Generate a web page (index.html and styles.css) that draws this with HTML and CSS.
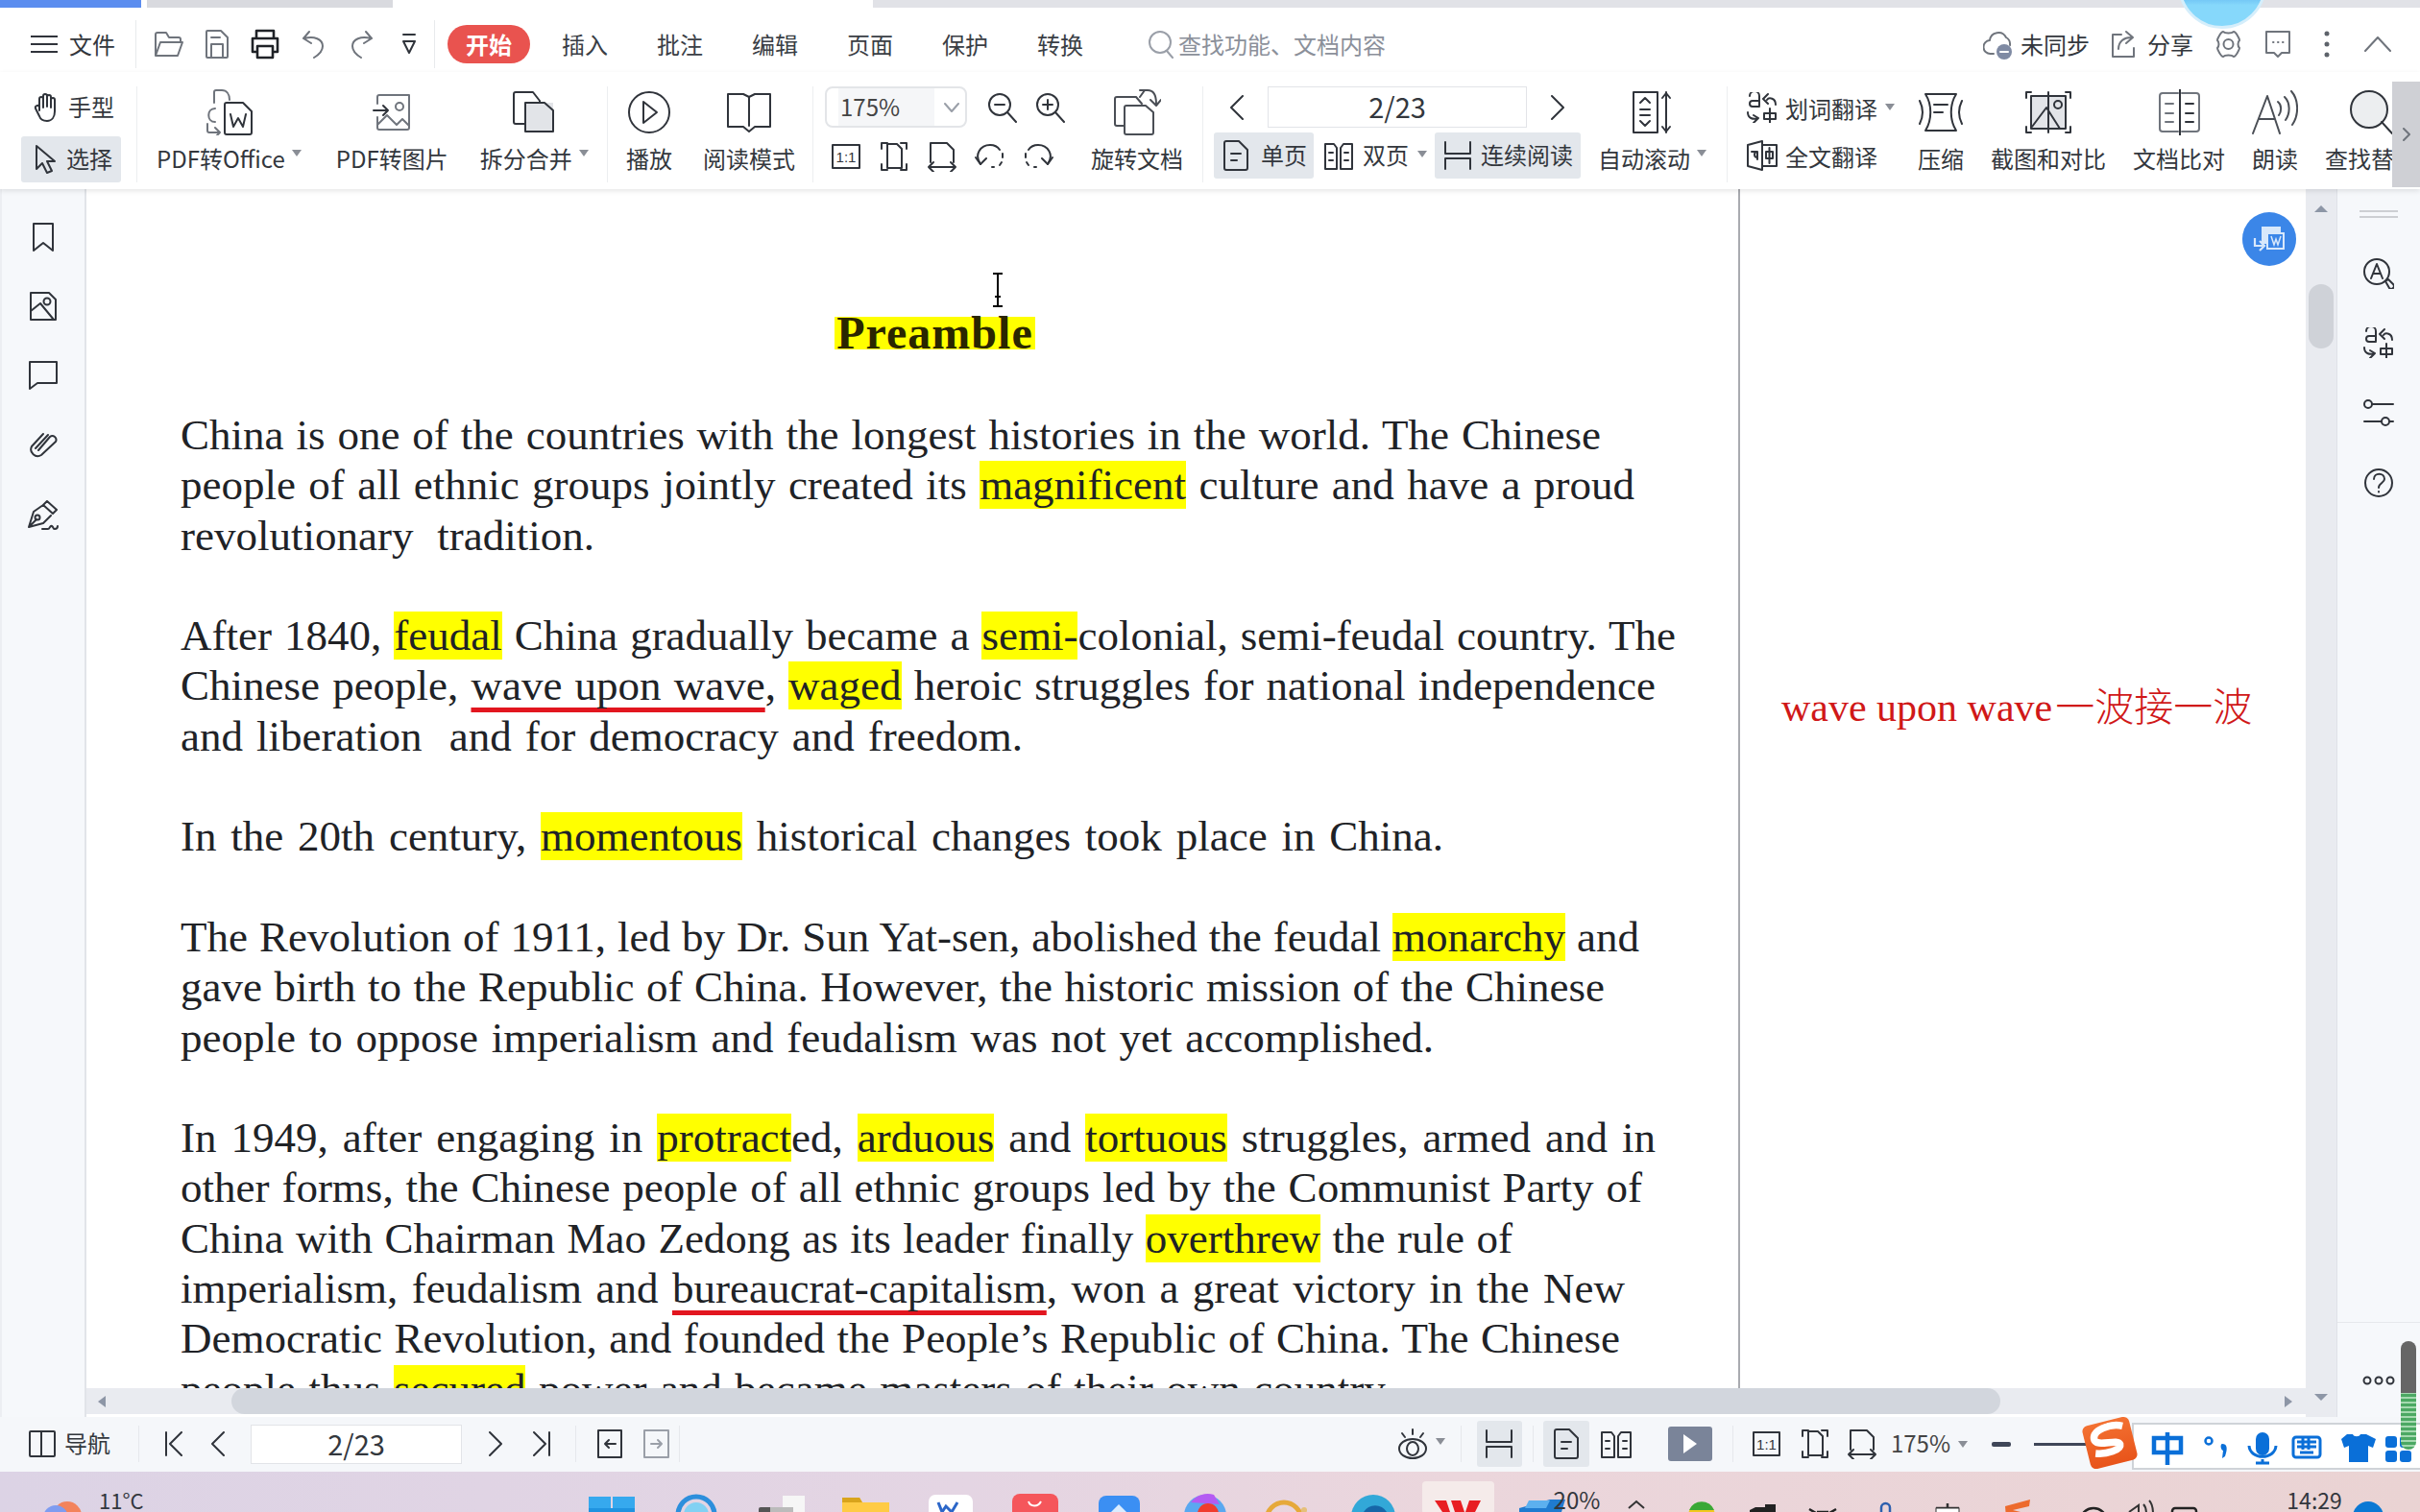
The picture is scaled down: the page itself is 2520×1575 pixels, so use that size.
FILE: index.html
```html
<!DOCTYPE html>
<html lang="zh-CN">
<head>
<meta charset="utf-8">
<title>WPS PDF</title>
<link rel="stylesheet" href="styles.css">
</head>
<body>
<div class="app">
  <div class="strip"><i class="s-blue"></i><i class="s-gray"></i><i class="s-rest"></i></div>

  <div class="menu">
    <svg class="s" width="28" height="22" viewBox="0 0 28 22"><path d="M0 3h28M0 11h28M0 19h28"/></svg>
    <span class="file">文件</span>
    <i class="msep m1"></i>
    <div class="qa">
      <svg class="s gy" width="32" height="30" viewBox="0 0 32 30"><path d="M2 27V5a2 2 0 0 1 2-2h9l3 5h10a2 2 0 0 1 2 2v3M2 27l5-14h23l-5 14z"/></svg>
      <svg class="s gy" width="26" height="32" viewBox="0 0 26 32"><path d="M2 3a1 1 0 0 1 1-1h14l7 7v20a1 1 0 0 1-1 1H3a1 1 0 0 1-1-1zM7 30V16h12v14M7 9h9"/></svg>
      <svg class="s thick" width="30" height="32" viewBox="0 0 30 32"><path d="M6 10V2h18v8M6 24H2V10h26v14h-4M7 18h16v12H7z"/></svg>
      <svg class="s gy" width="25" height="30" viewBox="0 0 25 30"><path d="M8 2L2 9l8 5M3 9c10-3 19 1 19 8 0 5-4 9-9 12"/></svg>
      <svg class="s gy" width="25" height="30" viewBox="0 0 25 30"><path d="M17 2l6 7-8 5M22 9C12 6 3 10 3 17c0 5 4 9 9 12"/></svg>
      <svg class="s" width="18" height="24" viewBox="0 0 18 24"><path d="M3 2h12M3 9l6 12 6-12z"/></svg>
    </div>
    <i class="msep m2"></i>
    <span class="pill">开始</span>
    <div class="tabs"><span>插入</span><span>批注</span><span>编辑</span><span>页面</span><span>保护</span><span>转换</span></div>
    <div class="search">
      <svg class="s sg" width="28" height="30" viewBox="0 0 28 30"><circle cx="13" cy="13" r="11"/><path d="M20 22l6 7"/></svg>
      <span>查找功能、文档内容</span>
    </div>
    <div class="mright">
      <svg class="s gy" width="30" height="32" viewBox="0 0 30 32"><path d="M11 26H8a7 7 0 0 1-1-14 9 9 0 0 1 17-3 8 8 0 0 1 4 8"/><circle class="cf" cx="22" cy="24" r="8"/><path class="wl" d="M18 24h8"/></svg>
      <span class="t1">未同步</span>
      <svg class="s gy t2" width="27" height="30" viewBox="0 0 27 30"><path d="M11 5H2v23h22v-9M8 20c0-8 6-12 13-12M16 2l7 6-7 6"/></svg>
      <span class="t3">分享</span>
      <svg class="s gy t2" width="29" height="32" viewBox="0 0 29 32"><path d="M9 3c2 2 9 2 11 0 2 0 6 7 6 9-2 2-2 6 0 8 0 2-4 9-6 9-2-2-9-2-11 0-2 0-6-7-6-9 2-2 2-6 0-8 0-2 4-9 6-9z"/><circle cx="14.500" cy="16" r="5"/></svg>
      <svg class="s gy t4" width="28" height="30" viewBox="0 0 28 30"><path d="M2 2h24v22h-8l-4 4-4-4H2z"/><path d="M9 13h.5M14 13h.5M19 13h.5"/></svg>
      <svg class="kebab" width="8" height="28" viewBox="0 0 8 28"><circle cx="4" cy="3" r="2.500"/><circle cx="4" cy="14" r="2.500"/><circle cx="4" cy="25" r="2.500"/></svg>
      <svg class="s gy t5" width="28" height="16" viewBox="0 0 28 16"><path d="M1 15L14 1l13 14"/></svg>
    </div>
  </div>

  <div class="ribbon">
    <div class="g ga">
      <div class="mode hand">
        <svg class="s" width="26" height="32" viewBox="0 0 26 32"><path d="M6 19V7a2 2 0 0 1 4 0V4a2 2 0 0 1 4 0v1a2 2 0 0 1 4 0v3a2 2 0 0 1 4 0v12c0 6-3 10-8 10-4 0-7-2-8-5l-4-8c-1-3 3-4 4-2z"/><path d="M10 7v9M14 4v11M18 6v10"/></svg>
        <span>手型</span>
      </div>
      <div class="mode on">
        <svg class="s" width="24" height="32" viewBox="0 0 24 32"><path d="M3 2v24l6-6 5 10 5-2-5-10h8z"/></svg>
        <span>选择</span>
      </div>
    </div>

    <div class="g gb">
      <div class="tool">
        <div class="ti"><svg class="s" width="49" height="48" viewBox="0 0 49 48"><path class="gyp" d="M9 14V3a2 2 0 0 1 2-2h6c5 0 8 4 8 10M10 20c-9 0-9 14 0 14M2 36v7a2 2 0 0 0 2 2h11M10 40l5 5-5 5"/><path d="M20 16a2 2 0 0 1 2-2h17l9 9v22a2 2 0 0 1-2 2H22a2 2 0 0 1-2-2zM26 26l3 13 5-9 5 9 3-13"/></svg></div>
        <div class="tl">PDF转Office<i class="car"></i></div>
      </div>
      <div class="tool">
        <div class="ti"><svg class="s" width="40" height="38" viewBox="0 0 40 38"><path class="gyp" d="M5 10V3a2 2 0 0 1 2-2h31v34a2 2 0 0 1-2 2H7a2 2 0 0 1-2-2V24M5 32l10-10 10 10 6-6 7 7"/><circle class="gyp" cx="28" cy="13" r="4"/><path d="M1 17h15M11 12l5 5-5 5"/></svg></div>
        <div class="tl">PDF转图片</div>
      </div>
      <div class="tool merge">
        <div class="ti"><svg class="s" width="44" height="44" viewBox="0 0 44 44"><rect class="fg" x="13" y="12" width="29" height="30"/><path d="M1 3a2 2 0 0 1 2-2h18l7 9v2M13 34H3a2 2 0 0 1-2-2V3"/><path d="M13 12h20l9 8v22H13z"/></svg></div>
        <div class="tl">拆分合并<i class="car"></i></div>
      </div>
    </div>

    <div class="g gc">
      <div class="tool">
        <div class="ti"><svg class="s" width="44" height="44" viewBox="0 0 44 44"><circle cx="22" cy="22" r="21"/><path d="M16 11l14 11-14 11z"/></svg></div>
        <div class="tl">播放</div>
      </div>
      <div class="tool">
        <div class="ti"><svg class="s" width="46" height="42" viewBox="0 0 46 42"><path d="M1 2h16l6 3 6-3h16v34H29l-6 5-6-5H1zM23 5v30"/></svg></div>
        <div class="tl">阅读模式</div>
      </div>
    </div>

    <div class="g gd">
      <div class="zcol">
        <div class="zrow">
          <div class="zbox"><span class="zval">175%</span><svg class="s sg" width="16" height="10" viewBox="0 0 16 10"><path d="M1 1l7 8 7-8"/></svg></div>
          <svg class="s zi1" width="32" height="32" viewBox="0 0 32 32"><circle cx="13" cy="13" r="11"/><path d="M8 13h10M21 21l9 10"/></svg>
          <svg class="s zi2" width="32" height="32" viewBox="0 0 32 32"><circle cx="13" cy="13" r="11"/><path d="M8 13h10M13 8v10M21 21l9 10"/></svg>
        </div>
        <div class="qa small">
          <svg class="s" width="30" height="26" viewBox="0 0 30 26"><rect x="1" y="1" width="28" height="24"/><text x="15" y="19" class="svt">1:1</text></svg>
          <svg class="s" width="28" height="30" viewBox="0 0 28 30"><path d="M7 1H1v6M21 1h6v6M7 29H1v-6M21 29h6v-6"/><path d="M7 2h10l5 5v20H7z"/></svg>
          <svg class="s" width="30" height="32" viewBox="0 0 30 32"><path d="M3 22V2h17l7 7v13M1 27h28M6 22l-5 5 5 5M24 22l5 5-5 5"/></svg>
          <svg class="s" width="32" height="28" viewBox="0 0 32 28"><path d="M6 22C-1 12 6 2 16 2c4 0 8 2 10 5"/><path d="M29 11v4M28 20l-2 3M20 25h-2"/><path d="M1 15l5 7 6-6"/></svg>
          <svg class="s" width="32" height="28" viewBox="0 0 32 28"><path d="M26 22c7-10 0-20-10-20-4 0-8 2-10 5"/><path d="M3 11v4M4 20l2 3M12 25h2"/><path d="M31 15l-5 7-6-6"/></svg>
        </div>
      </div>
      <div class="tool rot">
        <div class="ti"><svg class="s" width="49" height="48" viewBox="0 0 49 48"><path class="thin" d="M11 38H3a2 2 0 0 1-2-2V10a2 2 0 0 1 2-2h20l6 7"/><path class="thin" d="M11 19a2 2 0 0 1 2-2h20l8 7v21a2 2 0 0 1-2 2H13a2 2 0 0 1-2-2zM27 8l5-7M27 1h8c6 0 9 4 9 14M38 11l6 6 5-6"/></svg></div>
        <div class="tl">旋转文档</div>
      </div>
    </div>

    <div class="g ge">
      <div class="ncol">
        <div class="nrow">
          <svg class="s" width="14" height="26" viewBox="0 0 14 26"><path d="M13 1L1 13l12 12"/></svg>
          <div class="pinput">2/23</div>
          <svg class="s" width="14" height="26" viewBox="0 0 14 26"><path d="M1 1l12 12L1 25"/></svg>
        </div>
        <div class="vrow">
          <div class="vbtn on b1">
            <svg class="s" width="26" height="32" viewBox="0 0 26 32"><path d="M1 3a2 2 0 0 1 2-2h13l9 9v19a2 2 0 0 1-2 2H3a2 2 0 0 1-2-2zM8 14h10M8 21h6"/></svg>
            <span>单页</span>
          </div>
          <div class="vbtn b2">
            <svg class="s" width="30" height="30" viewBox="0 0 30 30"><path d="M1 3h9l3 4v22H1zM17 7l3-4h9v26H17zM5 12h4M5 20h4M21 12h4M21 20h4"/></svg>
            <span>双页</span><i class="car"></i>
          </div>
          <div class="vbtn on b3">
            <svg class="s" width="28" height="30" viewBox="0 0 28 30"><path d="M1 1v12h26V1M1 29V18h26v11"/></svg>
            <span>连续阅读</span>
          </div>
        </div>
      </div>
      <div class="tool auto">
        <div class="ti"><svg class="s" width="42" height="44" viewBox="0 0 42 44"><rect x="1" y="1" width="25" height="42"/><path d="M8 12l5-5 5 5M8 31l5 5 5-5M8 19h10M8 25h10M35 1v42M31 7l4-5 4 5M31 37l4 5 4-5"/></svg></div>
        <div class="tl">自动滚动<i class="car"></i></div>
      </div>
    </div>

    <div class="gf">
      <div class="tcol">
        <div class="trow">
          <svg class="s" width="32" height="32" viewBox="0 0 32 32"><path d="M3 4a5 5 0 0 1 10 0v10M13 9H6a3 3 0 0 0 0 6h7M21 8c2-3 9-2 9 5M17 7l5-5M17 7l5 5M1 21c0 6 5 8 11 6M7 24l5 3-5 5M18 22h12v6H18zM24 17v15"/></svg>
          <span>划词翻译</span><i class="car"></i>
        </div>
        <div class="trow">
          <svg class="s" width="32" height="32" viewBox="0 0 32 32"><path d="M1 5l15-4v30L1 27zM16 5h15v22H16zM20 12h7v7h-7zM23.500 8v16M11 12a3 3 0 1 0 0 6v2M5 12h6v8"/></svg>
          <span>全文翻译</span>
        </div>
      </div>
      <div class="tool">
        <div class="ti"><svg class="s" width="46" height="40" viewBox="0 0 46 40"><path d="M7 1h32c-7 11-7 27 0 38H7c7-11 7-27 0-38zM16 12h14M16 20h9M1 8c4 8 4 16 0 24M45 8c-4 8-4 16 0 24"/></svg></div>
        <div class="tl">压缩</div>
      </div>
      <div class="tool">
        <div class="ti"><svg class="s" width="48" height="44" viewBox="0 0 48 44"><rect class="fg" x="6" y="5" width="36" height="34"/><path d="M6 1H1v6M42 1h5v6M6 43H1v-6M42 43h5v-6M6 5h36v34H6zM7 37L22 17l14 22M24 1v42"/><circle cx="34" cy="14" r="4"/></svg></div>
        <div class="tl">截图和对比</div>
      </div>
      <div class="tool">
        <div class="ti"><svg class="s" width="43" height="48" viewBox="0 0 43 48"><path class="gyp" d="M20 4H4a3 3 0 0 0-3 3v34a3 3 0 0 0 3 3h16M24 4h15a3 3 0 0 1 3 3v34a3 3 0 0 1-3 3H24M7 15h8M7 25h8M7 34h8"/><path d="M22 0v48M28 15h8M28 25h8M28 34h8"/></svg></div>
        <div class="tl">文档比对</div>
      </div>
      <div class="tool">
        <div class="ti"><svg class="s thin" width="48" height="46" viewBox="0 0 48 46"><path d="M1 45L16 6l13 39M7 30h17M27 12c4 3 4 10 1 14M34 7c6 6 6 17 1 24M41 1c8 9 8 25 1 35"/></svg></div>
        <div class="tl">朗读</div>
      </div>
      <div class="tool">
        <div class="ti"><svg class="s" width="44" height="46" viewBox="0 0 44 46"><circle class="fl" cx="20" cy="20" r="19"/><path d="M33 33l11 12"/></svg></div>
        <div class="tl">查找替换</div>
      </div>
    </div>
    <div class="rmore"><svg class="s gy" width="8" height="14" viewBox="0 0 8 14"><path d="M1 1l6 6-6 6"/></svg></div>
  </div>

  <div class="main">
    <aside class="rail">
      <svg class="s" width="22" height="30" viewBox="0 0 22 30"><path d="M1 1h20v28l-10-8-10 8z"/></svg>
      <svg class="s" width="28" height="30" viewBox="0 0 28 30"><path d="M1 1h19l7 7v21H1z"/><path d="M1 20l10-8 14 17"/><circle cx="18" cy="10" r="3.500"/></svg>
      <svg class="s" width="30" height="30" viewBox="0 0 30 30"><path d="M1 1h28v22H9l-8 6z"/></svg>
      <svg class="s" width="32" height="30" viewBox="0 0 32 30"><path d="M11 21L23 7a4 4 0 0 1 6 5L14 26a7 7 0 0 1-10-9L16 4M8 19L21 5"/></svg>
      <svg class="s" width="32" height="34" viewBox="0 0 32 34"><path d="M20 2l10 9-4 4-10-9zM16 6L6 13 1 29l15-4 8-8M1 29l8-8"/><circle cx="10" cy="19" r="2.500"/><path d="M15 31h6c2 0 2-4 4-3s1 3 3 3 3-1 3-3"/></svg>
    </aside>
    <div class="center">
      <div class="docrow">
        <div class="page">
          <div class="title"><span>Preamble</span></div>
          <div class="para">
            <div class="ln w1">China is one of the countries with the longest histories in the world. The Chinese</div>
            <div class="ln w2">people of all ethnic groups jointly created its <b class="hl">magnificent</b> culture and have a proud</div>
            <div class="ln w3">revolutionary tradition.</div>
          </div>
          <div class="para">
            <div class="ln w4">After 1840, <b class="hl">feudal</b> China gradually became a <b class="hl">semi-</b>colonial, semi-feudal country. The</div>
            <div class="ln w5">Chinese people, <u class="red">wave upon wave</u>, <b class="hl">waged</b> heroic struggles for national independence</div>
            <div class="ln w6">and liberation &nbsp;and for democracy and freedom.</div>
          </div>
          <div class="para">
            <div class="ln w7">In the 20th century, <b class="hl">momentous</b> historical changes took place in China.</div>
          </div>
          <div class="para">
            <div class="ln w8">The Revolution of 1911, led by Dr. Sun Yat-sen, abolished the feudal <b class="hl">monarchy</b> and</div>
            <div class="ln w9">gave birth to the Republic of China. However, the historic mission of the Chinese</div>
            <div class="ln w10">people to oppose imperialism and feudalism was not yet accomplished.</div>
          </div>
          <div class="para">
            <div class="ln w11">In 1949, after engaging in <b class="hl">protract</b>ed, <b class="hl">arduous</b> and <b class="hl">tortuous</b> struggles, armed and in</div>
            <div class="ln w12">other forms, the Chinese people of all ethnic groups led by the Communist Party of</div>
            <div class="ln w13">China with Chairman Mao Zedong as its leader finally <b class="hl">overthrew</b> the rule of</div>
            <div class="ln w14">imperialism, feudalism and <u class="red">bureaucrat-capitalism</u>, won a great victory in the New</div>
            <div class="ln w15">Democratic Revolution, and founded the People’s Republic of China. The Chinese</div>
            <div class="ln w16">people thus <b class="hl">secured</b> power and became masters of their own country.</div>
          </div>
        </div>
        <div class="note"><span class="nl">wave upon wave</span><span class="nc">一波接一波</span></div>
      </div>
      <div class="hscroll">
        <i class="tri l"></i><i class="thumb"></i><i class="tri r"></i>
      </div>
    </div>
    <div class="vscroll"><i class="tri u"></i><i class="vthumb"></i><i class="tri d"></i></div>
    <aside class="rrail">
      <svg class="handle" width="40" height="8" viewBox="0 0 40 8"><path d="M0 1h40M0 7h40"/></svg>
      <svg class="s" width="32" height="32" viewBox="0 0 32 32"><circle cx="14" cy="14" r="13"/><path d="M8 21l6-15 6 15M10 16h8M23 24l3-2 5 5a2 2 0 0 1-4 4z"/></svg>
      <svg class="s rr2" width="32" height="32" viewBox="0 0 32 32"><path d="M3 4a5 5 0 0 1 10 0v10M13 9H6a3 3 0 0 0 0 6h7M21 8c2-3 9-2 9 5M17 7l5-5M17 7l5 5M1 21c0 6 5 8 11 6M7 24l5 3-5 5M18 22h12v6H18zM24 17v15"/></svg>
      <svg class="s rr3" width="32" height="28" viewBox="0 0 32 28"><circle cx="5" cy="5" r="4"/><path d="M9 5h22M1 23h18M27 23h4"/><circle cx="23" cy="23" r="4"/></svg>
      <svg class="s rr4" width="30" height="30" viewBox="0 0 30 30"><circle cx="15" cy="15" r="14"/><path d="M10 11c0-7 11-7 11 0 0 4-6 4-6 9M15 24v.5"/></svg>
      <div class="rbot"><svg class="s" width="34" height="10" viewBox="0 0 34 10"><circle cx="5" cy="5" r="3.500"/><circle cx="17" cy="5" r="3.500"/><circle cx="29" cy="5" r="3.500"/></svg></div>
    </aside>
  </div>

  <div class="status">
    <div class="sleft">
      <svg class="s" width="28" height="28" viewBox="0 0 28 28"><rect x="1" y="1" width="26" height="26" rx="1"/><path d="M13 1v26"/></svg>
      <span class="nav">导航</span>
      <i class="ssep n1"></i>
      <svg class="s n2" width="18" height="26" viewBox="0 0 18 26"><path d="M1 1v24M17 1L5 13l12 12"/></svg>
      <svg class="s n3" width="14" height="26" viewBox="0 0 14 26"><path d="M13 1L1 13l12 12"/></svg>
      <div class="pinput sp">2/23</div>
      <svg class="s n4" width="14" height="26" viewBox="0 0 14 26"><path d="M1 1l12 12L1 25"/></svg>
      <svg class="s n5" width="18" height="26" viewBox="0 0 18 26"><path d="M1 1l12 12L1 25M17 1v24"/></svg>
      <i class="ssep n6"></i>
      <svg class="s n7" width="26" height="30" viewBox="0 0 26 30"><rect x="1" y="1" width="24" height="28"/><path d="M19 15H8M12 11l-4 4 4 4"/></svg>
      <svg class="s sg n8" width="27" height="30" viewBox="0 0 27 30"><rect x="1" y="1" width="25" height="28"/><path d="M8 15h11M15 11l4 4-4 4"/></svg>
      <i class="ssep n9"></i>
    </div>
    <div class="sright">
      <svg class="s" width="30" height="32" viewBox="0 0 30 32"><ellipse cx="15" cy="21" rx="14" ry="10"/><ellipse cx="15" cy="21" rx="6" ry="7"/><path d="M15 1v5M4 5l3 4M26 5l-3 4"/></svg>
      <i class="car e1"></i>
      <i class="ssep e2"></i>
      <div class="sbtn e3"><svg class="s" width="28" height="30" viewBox="0 0 28 30"><path d="M1 1v12h26V1M1 29V18h26v11"/></svg></div>
      <i class="ssep e4"></i>
      <div class="sbtn e5"><svg class="s" width="26" height="32" viewBox="0 0 26 32"><path d="M1 3a2 2 0 0 1 2-2h13l9 9v19a2 2 0 0 1-2 2H3a2 2 0 0 1-2-2zM8 14h10M8 21h6"/></svg></div>
      <svg class="s e6" width="32" height="30" viewBox="0 0 32 30"><path d="M1 3h10l3 4v22H1zM18 7l3-4h10v26H18zM5 12h4M5 20h4M23 12h4M23 20h4"/></svg>
      <div class="play e7"><i></i></div>
      <i class="ssep e8"></i>
      <svg class="s e9" width="29" height="26" viewBox="0 0 29 26"><rect x="1" y="1" width="27" height="24"/><text x="14.500" y="19" class="svt">1:1</text></svg>
      <svg class="s e10" width="28" height="30" viewBox="0 0 28 30"><path d="M7 1H1v6M21 1h6v6M7 29H1v-6M21 29h6v-6"/><path d="M7 2h10l5 5v20H7z"/></svg>
      <svg class="s e11" width="30" height="32" viewBox="0 0 30 32"><path d="M3 22V2h17l7 7v13M1 27h28M6 22l-5 5 5 5M24 22l5 5-5 5"/></svg>
      <span class="pct">175%</span>
      <i class="car e12"></i>
      <i class="minus"></i>
      <i class="slider"></i>
    </div>
  </div>

  <div class="taskbar">
    <svg class="tbicons" width="2520" height="42" viewBox="0 0 2520 42">
      <circle cx="70" cy="46" r="15" fill="#f3835c"/><circle cx="58" cy="48" r="13" fill="#7f9cf0"/>
      <path d="M613 38V26h23v12zM638 26h23v12h-23z" fill="#36a9ee"/><path d="M613 42h48v-4h-48z" fill="#1f93e0"/>
      <circle cx="725" cy="45" r="19" fill="none" stroke="#2c8fdc" stroke-width="5"/><circle cx="725" cy="45" r="13" fill="#82d1f3"/>
      <rect x="815" y="25" width="23" height="20" fill="#f6f6f6"/><rect x="790" y="37" width="36" height="10" rx="2" fill="#555"/><rect x="802" y="37" width="24" height="10" fill="#bbb"/>
      <path d="M877 27h18l3 5h28v12h-49z" fill="#ffcb45"/><path d="M877 27h18l3 5h-21z" fill="#d9a41c"/>
      <rect x="967" y="24" width="46" height="24" rx="7" fill="#fff"/><path d="M977 32l4 10 4-6 6 6 6-10" stroke="#2b66c8" stroke-width="3" fill="none"/>
      <rect x="1054" y="23" width="48" height="26" rx="8" fill="#f5565b"/><path d="M1071 31c2 6 10 6 13 0" stroke="#fff" stroke-width="2" fill="none"/>
      <rect x="1144" y="25" width="43" height="24" rx="8" fill="#3b8ff3"/><path d="M1157 42l8-8 8 8z" fill="#d9ecff"/>
      <circle cx="1255" cy="46" r="22" fill="#5aa8f0"/><path d="M1240 32a22 22 0 0 1 24-8l6 10z" fill="#b45bf2"/><circle cx="1258" cy="44" r="11" fill="#f03c2e"/>
      <circle cx="1337" cy="50" r="18" fill="none" stroke="#e6a93a" stroke-width="5"/><circle cx="1358" cy="40" r="3" fill="#e6c07a"/>
      <circle cx="1430" cy="47" r="23" fill="#32a8d8"/><path d="M1420 42a14 14 0 0 1 24 0v8h-24z" fill="#1666a8"/>
      <rect x="1481" y="10" width="75" height="34" rx="4" fill="#f5ebea"/><path d="M1494 30h12l4 12h-8zM1511 30h10l4 12h-10zM1530 30h12l-6 12h-10z" fill="#e81e22"/>
      <path d="M1582 38l32-9h16l-4 13h-44z" fill="#1f7bd0"/><path d="M1592 30h22l-4 8h-22z" fill="#5cb0ef"/>
      <path d="M1696 38l8-7 8 7" fill="none" stroke="#333" stroke-width="2"/>
      <circle cx="1772" cy="46" r="14" fill="#f2c81e"/><path d="M1759 40a14 14 0 0 1 26 0z" fill="#3aa836"/>
      <path d="M1822 40l6-3h10v-3h11v10h-27z" fill="#222"/>
      <path d="M1884 39l7 4M1912 39l-7 4M1892 42h12" stroke="#222" stroke-width="2.500" fill="none"/>
      <rect x="1959" y="33" width="9" height="20" rx="4.500" fill="none" stroke="#2d5fae" stroke-width="2.500"/>
      <path d="M2016 38h24M2028 33v10" stroke="#333" stroke-width="2.500" fill="none"/><rect x="2016" y="38" width="24" height="8" fill="#fff" stroke="#333"/>
      <path d="M2088 36l26-7-1 7-17 4 16 4-3 4h-20z" fill="#ed6a2d"/>
      <circle cx="2180" cy="52" r="14" fill="none" stroke="#222" stroke-width="2.500"/>
      <path d="M2217 42l10-7v10M2232 34c3 3 3 8 3 10M2238 30c4 4 4 10 4 14" fill="none" stroke="#333" stroke-width="2"/>
      <rect x="2262" y="38" width="25" height="14" rx="3" fill="none" stroke="#222" stroke-width="2.500"/>
      <circle cx="2466" cy="47" r="16" fill="#0a78d4"/>
    </svg>
    <span class="temp">11°C</span>
    <span class="batt">20%</span>
    <span class="clock">14:29</span>
  </div>

  <div class="orb"></div>
  <div class="fab"><svg width="34" height="28" viewBox="0 0 34 28"><rect x="9" y="1" width="20" height="8" fill="#d8e8fb"/><path d="M9 9h6v10H9z" fill="#d8e8fb"/><rect x="15" y="8" width="17" height="16" fill="#3b86e8" stroke="#d8e8fb" stroke-width="2"/><path d="M19 11l3 9 2-6 2 6 3-9" stroke="#d8e8fb" stroke-width="1.500" fill="none"/><path d="M2 13v8h8M7 16l5 5-5 5" stroke="#d8e8fb" stroke-width="2.200" fill="none"/></svg></div>
  <svg class="beam" width="12" height="36" viewBox="0 0 12 36"><path d="M1 1h10M1 35h10M6 1v34M3 25h6" stroke="#000" stroke-width="2" fill="none"/></svg>

  <div class="ime">
    <svg width="300" height="48" viewBox="0 0 300 48">
      <path d="M21 14h28v15H21zM35 8v34" fill="none" stroke="#0a6fd8" stroke-width="4.500"/>
      <circle cx="78" cy="17" r="3.500" fill="none" stroke="#0a6fd8" stroke-width="2.500"/><path d="M92 20c5 0 6 4 3 13l-3 2 1-8c-3-1-3-7-1-7z" fill="#0a6fd8"/>
      <rect x="127" y="8" width="14" height="24" rx="7" fill="#0a6fd8"/><path d="M120 22c1 15 27 15 28 0M134 36v4M127 40h14" fill="none" stroke="#0a6fd8" stroke-width="3"/>
      <rect x="166" y="13" width="28" height="21" rx="3" fill="none" stroke="#0a6fd8" stroke-width="3"/><path d="M170 18h20M170 23h20M173 29h14M176 14v12M182 14v12" stroke="#0a6fd8" stroke-width="3" fill="none"/>
      <path d="M222 10h6c1 3 7 3 8 0h6l10 5-3 9-5-2v17h-20V22l-5 2-3-9z" fill="#0a6fd8"/>
      <rect x="262" y="12" width="12" height="12" rx="3" fill="#0a6fd8"/><rect x="262" y="27" width="12" height="12" rx="3" fill="#0a6fd8"/><rect x="277" y="27" width="12" height="12" rx="3" fill="#0a6fd8"/><rect x="277" y="12" width="12" height="12" rx="3" fill="#0a6fd8"/>
    </svg>
  </div>
  <div class="slogo"><svg width="40" height="42" viewBox="0 0 40 42"><path d="M37 7C25 1 6 4 5 13c-1 10 24 5 25 12 0 6-16 7-27 3" fill="none" stroke="#fff" stroke-width="7.500"/></svg></div>
  <div class="volbar"></div>
</div>
</body>
</html>
```

FILE: styles.css
```css
html,body{margin:0;padding:0;}
body{width:2520px;height:1575px;overflow:hidden;font-family:"Noto Sans CJK SC","Noto Sans",sans-serif;color:#33373d;font-size:24px;background:#fff;}
i{display:block;font-style:normal;}
svg{display:block;flex:none;}
.app{position:relative;width:2520px;height:1575px;display:flex;flex-direction:column;overflow:hidden;}

.s{fill:none;stroke:#30343b;stroke-width:2;stroke-linecap:round;stroke-linejoin:round;}
.s.gy{stroke:#6f747c;}
.s.sg{stroke:#9a9fa8;}
.s.thick{stroke:#1f2227;stroke-width:2.600;}
.s .gyp{stroke:#6f747c;}
.s.thin,.s .thin{stroke:#4a4e55;}
.s .fg{fill:#e2e4e8;stroke:none;}
.s .fl{fill:#eceef0;}
.s .cf{fill:#7f8aa3;stroke:none;}
.s .wl{stroke:#fff;}
.svt{font:400 15px "Liberation Sans",sans-serif;text-anchor:middle;stroke:none;fill:#30343b;}

.strip{height:8px;display:flex;flex:none;}
.s-blue{width:147px;background:#5b8def;}
.s-gray{width:256px;margin-left:6px;background:#d9dadf;}
.s-rest{margin-left:500px;flex:1;background:#e1e2e7;}

.menu{height:67px;flex:none;display:flex;align-items:center;padding:9px 0 0 32px;box-sizing:border-box;line-height:1;}
.file{margin-left:12px;}
.msep{width:1px;height:50px;background:#e8eaec;}
.m1{margin-left:21px;}
.qa{display:grid;grid-auto-flow:column;grid-auto-columns:50px;justify-items:center;align-items:center;}
.m1 + .qa{margin-left:9px;}
.m2{margin-left:1px;}
.pill{margin-left:13px;width:86px;height:40px;border-radius:20px;background:#e9534f;color:#fff;font-weight:700;display:flex;align-items:center;justify-content:center;}
.tabs{margin-left:33px;display:flex;gap:51px;color:#3a3e45;}
.search{margin-left:67px;display:flex;align-items:center;gap:4px;color:#8b909a;}
.mright{margin-left:auto;padding-right:30px;display:flex;align-items:center;}
.t1{margin-left:9px;}
.t2{margin-left:22px;}
.t3{margin-left:11px;}
.t4{margin-left:23px;}
.t5{margin-left:35px;}
.kebab{margin-left:33px;fill:#5e636b;}

.ribbon{height:122px;flex:none;display:flex;padding-top:15px;box-sizing:border-box;position:relative;box-shadow:0 2px 5px rgba(0,0,0,.1);z-index:2;background:#fff;overflow:hidden;}
.g{height:100px;flex:none;box-sizing:border-box;border-right:1px solid #eceef0;display:flex;}
.ga{width:143px;flex-direction:column;gap:8px;padding-left:22px;}
.gb{width:490px;padding-left:20px;gap:36px;}
.merge{margin-left:-3px;}
.gc{width:214px;padding-left:19px;gap:32px;}
.gd{width:406px;padding-left:12px;}
.ge{width:546px;padding-left:11px;}
.gf{flex:1;display:flex;padding-left:20px;gap:28px;white-space:nowrap;}
.mode{width:104px;height:48px;display:flex;align-items:center;box-sizing:border-box;padding-left:13px;gap:10px;}
.mode.hand{height:44px;}
.mode span{margin-top:-3px;}
.mode.on,.vbtn.on,.sbtn{background:#e3e7ec;border-radius:3px;}
.tool{display:flex;flex-direction:column;align-items:center;flex:none;}
.ti{height:53px;display:flex;align-items:center;justify-content:center;}
.tl{height:43px;line-height:43px;display:flex;align-items:center;white-space:nowrap;}
.car{width:0;height:0;border:5px solid transparent;border-top:7px solid #8a8e96;border-bottom:0;margin-left:7px;margin-top:-10px;}
.zcol{width:251px;}
.zrow{display:flex;align-items:center;height:43px;}
.zbox{width:148px;height:43px;box-sizing:border-box;border:2px solid #e3e5e8;border-radius:8px;display:flex;align-items:center;}
.zval{width:100px;height:100%;margin-left:12px;background:#f5f6f8;padding:0 0 2px 2px;box-sizing:border-box;display:flex;align-items:center;color:#444;margin-right:10px;}
.zi1{margin-left:21px;}
.zi2{margin-left:18px;}
.qa.small{margin-top:14px;margin-left:-3px;}
.rot{margin-left:26px;}
.ncol{width:383px;}
.nrow{height:43px;display:flex;align-items:center;padding-left:17px;gap:25px;}
.pinput{width:270px;height:43px;box-sizing:border-box;border:1px solid #e2e4e8;background:#fff;font-size:29px;display:flex;align-items:center;justify-content:center;color:#33373d;padding-bottom:3px;}
.vrow{display:flex;margin-top:5px;}
.vbtn{height:48px;display:flex;align-items:center;box-sizing:border-box;flex:none;}
.vbtn span{margin-top:-3px;}
.b1{width:104px;padding-left:10px;gap:13px;}
.b2{margin-left:11px;width:115px;gap:10px;}
.b2 .car{margin-left:-1px;margin-top:-4px;}
.b3{width:152px;padding-left:10px;gap:10px;}
.auto{margin-left:17px;}
.tcol{width:150px;padding-top:6px;}
.trow{height:32px;display:flex;align-items:center;gap:8px;margin-bottom:18px;}
.trow .car{margin-left:0;margin-top:-2px;}
.rmore{position:absolute;right:0;top:10px;width:29px;height:110px;background:#cfd0d5;display:flex;align-items:center;justify-content:center;}

.main{height:1279px;flex:none;display:flex;}
.rail{width:90px;flex:none;box-sizing:border-box;background:#f6f8fb;border-left:2px solid #eceef2;border-right:2px solid #e1e4e9;display:flex;flex-direction:column;align-items:center;gap:42px;padding-top:35px;}
.center{width:2311px;flex:none;display:flex;flex-direction:column;}
.docrow{height:1249px;flex:none;display:flex;background:#fff;overflow:hidden;}
.page{width:1722px;flex:none;box-sizing:border-box;border-right:2px solid #a9abb0;padding:133px 0 0 98px;font-family:"Liberation Serif",serif;font-size:45px;color:#202226;}
.title{height:34px;margin-bottom:63px;}
.title span{display:block;margin-left:681px;height:34px;line-height:34px;width:209px;background:#ffff00;color:#2a2600;font-weight:700;font-size:48px;letter-spacing:1px;text-align:center;}
.para{margin-bottom:52.3px;}
.ln{height:52.3px;line-height:52.3px;white-space:nowrap;text-align:justify;text-align-last:justify;}
.hl{font-weight:400;display:inline-block;height:50px;line-height:50px;background:#ffff00;vertical-align:top;margin-top:1px;}
.red{text-decoration:underline #e2161f 5px;text-underline-offset:8px;text-decoration-skip-ink:none;}
.w1{width:1479px;}.w2{width:1514px;}.w3{width:431px;}.w4{width:1557px;}.w5{width:1536px;}.w6{width:877px;}
.w7{width:1315px;}.w8{width:1519px;}.w9{width:1483px;}.w10{width:1305px;}.w11{width:1536px;}.w12{width:1522px;}
.w13{width:1387px;}.w14{width:1504px;}.w15{width:1499px;}.w16{width:1263px;}
.note{padding:506px 0 0 43px;color:#d01818;white-space:nowrap;display:flex;align-items:baseline;height:52px;}
.nl{font-family:"Liberation Serif",serif;font-size:42px;}
.nc{font-family:"Noto Sans CJK SC",sans-serif;font-size:41px;font-weight:300;margin-left:3px;}
.hscroll{height:27px;flex:none;background:#e9ebf0;display:flex;align-items:center;position:relative;}
.thumb{margin-left:151px;width:1842px;height:27px;border-radius:14px;background:#d2d6dd;}
.tri{width:0;height:0;border:6px solid transparent;}
.tri.l{position:absolute;left:12px;border-right:8px solid #8d96a6;border-left:0;}
.tri.r{position:absolute;right:14px;border-left:8px solid #8d96a6;border-right:0;}
.vscroll{width:33px;flex:none;box-sizing:border-box;border-right:1px solid #dfe2e7;background:#e9ebf0;display:flex;flex-direction:column;align-items:center;padding:17px 0 17px;}
.tri.u{border:7px solid transparent;border-bottom:7px solid #8d96a6;border-top:0;}
.tri.d{margin-top:auto;border:7px solid transparent;border-top:7px solid #8d96a6;border-bottom:0;}
.vthumb{margin-top:75px;width:26px;height:67px;border-radius:13px;background:#cfd2d8;margin-right:1px;}
.rrail{flex:1;background:#f6f8fb;display:flex;flex-direction:column;align-items:center;padding-top:22px;box-sizing:border-box;gap:42px;}
.rr2{margin-top:-2px;}.rr3{margin-top:1px;}.rr4{margin-top:2px;}
.handle{stroke:#cdcfd3;stroke-width:2;fill:none;}
.rbot{margin-top:auto;width:100%;height:99px;box-sizing:border-box;border-top:1px solid #e6e8ec;display:flex;justify-content:center;padding-top:55px;}

.status{height:57px;flex:none;background:#f5f7fa;display:flex;align-items:center;justify-content:space-between;padding:0 0 1px 30px;box-sizing:border-box;}
.sleft,.sright{display:flex;align-items:center;}
.nav{margin-left:9px;margin-top:-3px;}
.ssep{width:1px;height:38px;background:#e6e8ec;}
.n1{margin-left:29px;}.n2{margin-left:27px;}.n3{margin-left:30px;}
.pinput.sp{margin-left:27px;width:220px;height:41px;}
.n4{margin-left:28px;}.n5{margin-left:32px;}.n6{margin-left:26px;}.n7{margin-left:22px;}.n8{margin-left:22px;}.n9{margin-left:10px;}
.sright{padding-right:342px;}
.e1{margin-left:9px;margin-top:-6px;}
.e2{margin-left:16px;}
.sbtn{height:48px;display:flex;align-items:center;justify-content:center;}
.e3{width:47px;margin-left:16px;}
.e4{margin-left:11px;}
.e5{width:48px;margin-left:10px;}
.e6{margin-left:12px;}
.play{width:46px;height:36px;background:#7a8499;border-radius:3px;display:flex;align-items:center;justify-content:center;}
.play i{width:0;height:0;border:10px solid transparent;border-left:14px solid #fff;border-right:0;}
.e7{margin-left:38px;}
.e8{margin-left:21px;}
.e9{margin-left:20px;}.e10{margin-left:22px;}.e11{margin-left:20px;}
.pct{margin-left:15px;color:#444;margin-top:-3px;}
.e12{margin-left:8px;margin-top:0;}
.minus{margin-left:25px;width:20px;height:5px;border-radius:2px;background:#3f4658;}
.slider{margin-left:24px;width:60px;height:3px;background:#3f4658;}

.taskbar{height:43px;flex:1;position:relative;overflow:hidden;background:linear-gradient(90deg,#dcd3e5 0%,#e4d5e3 40%,#ebd6dc 60%,#ead3d3 100%);display:flex;font-size:24px;line-height:1;}
.tbicons{position:absolute;left:0;top:0;}
.temp{position:relative;margin-left:103px;margin-top:18px;font-size:22px;}
.batt{position:relative;margin-left:1468px;margin-top:17px;}
.clock{position:relative;margin-left:715px;margin-top:18px;font-size:23px;}

.orb{position:absolute;left:2268px;top:-62px;width:92px;height:92px;box-sizing:border-box;border-radius:50%;border:3px solid #d5eefb;background:linear-gradient(180deg,#3f9ce8 0%,#5db3ef 60%,#86d8fb 75%,#86d8fb 100%);z-index:3;}
.fab{position:absolute;left:2335px;top:221px;width:56px;height:56px;border-radius:50%;background:#3b86e8;display:flex;align-items:center;justify-content:center;}
.beam{position:absolute;left:1033px;top:284px;}
.ime{position:absolute;left:2220px;top:1482px;width:300px;height:49px;box-sizing:border-box;background:#fff;border:2px solid #cfd3d8;border-right:0;z-index:4;}
.slogo{position:absolute;left:2172px;top:1480px;width:50px;height:46px;border-radius:6px;background:linear-gradient(180deg,#f37132,#e8541a);transform:rotate(-14deg);display:flex;align-items:center;justify-content:center;z-index:5;}
.volbar{position:absolute;left:2500px;top:1397px;width:16px;height:113px;border-radius:8px;background:linear-gradient(180deg,#666 0,#666 48%,transparent 48%),repeating-linear-gradient(180deg,#4ba863 0,#4ba863 3px,#a5d9b0 3px,#a5d9b0 5px);z-index:6;}
```
